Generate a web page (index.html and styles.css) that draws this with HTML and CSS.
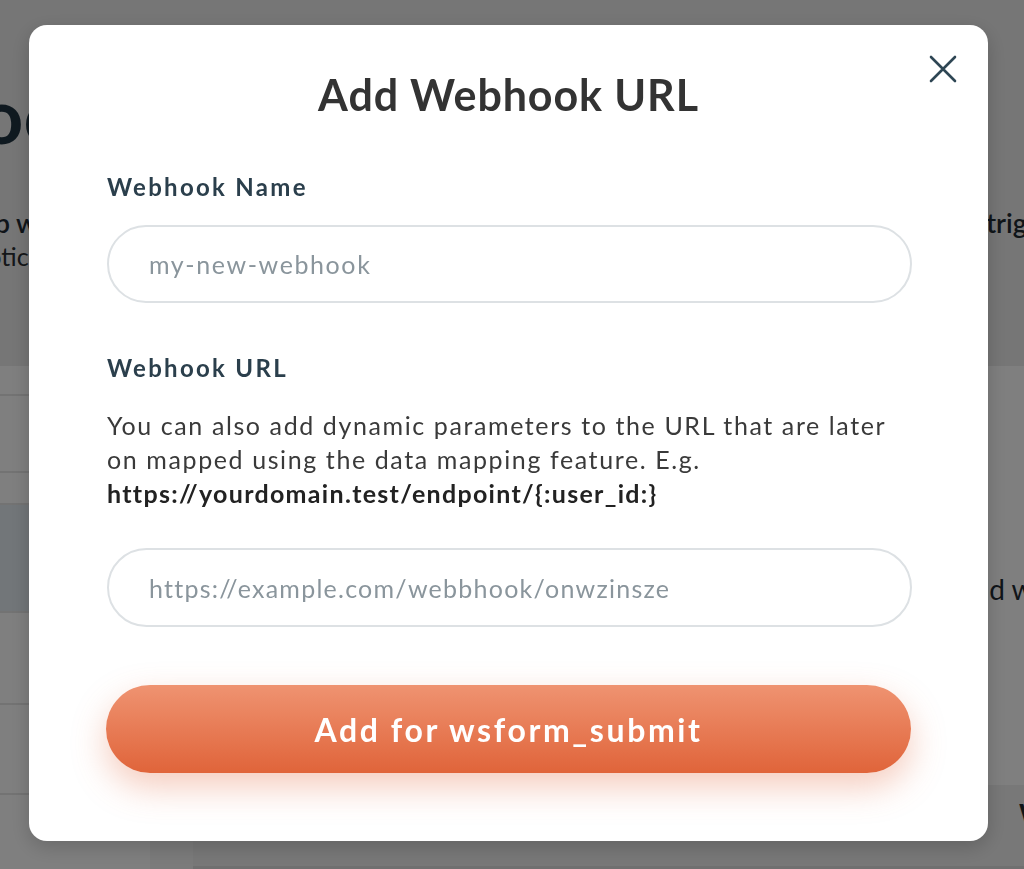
FILE: index.html
```html
<!DOCTYPE html>
<html lang="en">
<head>
<meta charset="utf-8">
<title>Add Webhook URL</title>
<link rel="stylesheet" href="styles.css">
</head>
<body>
<div class="page">
  <header class="page-head">
    <h1 class="page-title">Webhooks</h1>
    <div class="intro-row">
      <p class="intro-strong">Set up webhooks</p>
      <p class="intro-strong">trigger</p>
    </div>
    <p class="intro-text">Get a notice</p>
  </header>
  <div class="page-body">
    <aside class="side">
      <div class="side-row r1"></div>
      <div class="side-row r2"></div>
      <div class="side-row r3"></div>
      <div class="side-row r4"></div>
      <div class="side-row r5"></div>
      <div class="side-row r6"></div>
    </aside>
    <div class="side-gap"></div>
    <main class="main">
      <p class="main-text">Add webhooks</p>
      <div class="main-foot"><span class="main-foot-text">Webhook</span></div>
    </main>
  </div>
</div>

<div class="overlay">
  <div class="modal" role="dialog" aria-labelledby="modal-title">
    <button class="close" aria-label="Close">
      <svg width="28" height="28" viewBox="0 0 28 28" fill="none" stroke="#2e4654" stroke-width="2.6" stroke-linecap="round">
        <path d="M2 2 L26 26 M26 2 L2 26"/>
      </svg>
    </button>
    <h2 class="modal-title" id="modal-title">Add Webhook URL</h2>
    <div class="field">
      <label class="label" for="wh-name">Webhook Name</label>
      <input class="input" id="wh-name" type="text" placeholder="my-new-webhook">
    </div>
    <div class="field">
      <label class="label" for="wh-url">Webhook URL</label>
      <p class="help">You can also add dynamic parameters to the URL that are later on mapped using the data mapping feature. E.g. <strong>https://yourdomain.test/endpoint/{:user_id:}</strong></p>
      <input class="input input-url" id="wh-url" type="text" placeholder="https://example.com/webbhook/onwzinsze">
    </div>
    <button class="submit">Add for wsform_submit</button>
  </div>
</div>
</body>
</html>
```

FILE: styles.css
```css
* { box-sizing: border-box; }

html, body {
  margin: 0;
  padding: 0;
  height: 100%;
}

body {
  font-family: Lato, "Open Sans", Arial, sans-serif;
  background: #ffffff;
  color: #1d2b34;
  overflow: hidden;
}

/* Background page (dimmed behind the modal) */
.page {
  height: 869px;
  display: flex;
  flex-direction: column;
}

.page-head {
  height: 366px;
  flex: none;
  background: #ececec;
  padding-top: 70px;
  overflow: hidden;
}

.page-title {
  margin: 0 0 0 -222px;
  font-size: 76px;
  font-weight: 700;
  line-height: 90px;
  color: #1f3340;
  white-space: nowrap;
}

.intro-row {
  display: flex;
  justify-content: space-between;
  margin: 46px -41px 0 -66px;
}

.intro-strong {
  margin: 0;
  font-size: 27px;
  font-weight: 600;
  color: #1f2b33;
  line-height: 34px;
  white-space: nowrap;
}

.intro-text {
  margin: 1px 0 0 -92px;
  font-size: 25px;
  color: #2a2f33;
  line-height: 30px;
  white-space: nowrap;
}

.page-body {
  flex: 1;
  display: flex;
  background: #ffffff;
}

.side {
  width: 150px;
  flex: none;
  display: flex;
  flex-direction: column;
}

.side-row {
  border-bottom: 2px solid #e6e6e6;
}

.side-row.r1 { height: 30px; }
.side-row.r2 { height: 77px; }
.side-row.r3 { height: 32px; }
.side-row.r4 { height: 108px; background: #e4ecf2; }
.side-row.r5 { height: 92px; }
.side-row.r6 { height: 90px; }

.side-gap {
  width: 43px;
  flex: none;
  background: #f6f6f6;
}

.main {
  flex: 1;
  display: flex;
  flex-direction: column;
  overflow: hidden;
}

.main-text {
  margin: 206px 0 0 762px;
  font-size: 28px;
  color: #1f2b33;
  white-space: nowrap;
}

.main-foot {
  margin-top: auto;
  height: 84px;
  background: #f0f0f0;
  border-bottom: 3px solid #e0e0e0;
  padding: 12px 0 0 826px;
}

.main-foot-text {
  font-size: 28px;
  font-weight: 700;
  color: #1f2b33;
}

/* Overlay + modal */
.overlay {
  position: fixed;
  inset: 0;
  background: rgba(0, 0, 0, 0.5);
  padding: 25px 0 0 29px;
}

.modal {
  position: relative;
  width: 959px;
  height: 816px;
  background: #ffffff;
  border-radius: 18px;
  box-shadow: 0 6px 20px rgba(0, 0, 0, 0.18);
  padding: 44px 76px 0 78px;
  display: flex;
  flex-direction: column;
}

.close {
  position: absolute;
  top: 29px;
  right: 30px;
  width: 30px;
  height: 30px;
  padding: 1px;
  border: 0;
  background: transparent;
  cursor: pointer;
}

.modal-title {
  margin: 0 0 0 -2px;
  text-align: center;
  font-size: 43px;
  font-weight: 700;
  line-height: 52px;
  color: #333333;
  letter-spacing: 0.9px;
}

.field {
  display: flex;
  flex-direction: column;
}

.label {
  margin-top: 51px;
  font-size: 24px;
  font-weight: 700;
  line-height: 30px;
  color: #2b3f4c;
  letter-spacing: 2.3px;
}

.input {
  margin-top: 23px;
  width: 805px;
  height: 78px;
  border: 2px solid #dde1e4;
  border-radius: 40px;
  padding: 0 40px;
  font-family: inherit;
  font-size: 25px;
  letter-spacing: 1.6px;
  color: #333;
  background: #fff;
  outline: none;
}

.input::placeholder {
  color: #8a959c;
}

.field + .field .label {
  margin-top: 50px;
}

.help {
  margin: 25px 0 0;
  font-size: 25px;
  line-height: 34px;
  letter-spacing: 1.6px;
  color: #3a3a3a;
}

.help strong {
  font-weight: 700;
  color: #222;
  letter-spacing: 1.3px;
}

.field + .field .input {
  margin-top: 38px;
  height: 79px;
}

.input.input-url {
  letter-spacing: 1.25px;
}

.submit {
  margin-top: 58px;
  margin-left: -1px;
  width: 805px;
  height: 88px;
  flex: none;
  border: 0;
  border-radius: 44px;
  background: linear-gradient(180deg, #ef9371 0%, #e0643a 100%);
  color: #ffffff;
  font-family: inherit;
  font-size: 32px;
  font-weight: 700;
  letter-spacing: 2.6px;
  box-shadow: 0 14px 34px rgba(226, 110, 70, 0.35);
  cursor: pointer;
}
```
